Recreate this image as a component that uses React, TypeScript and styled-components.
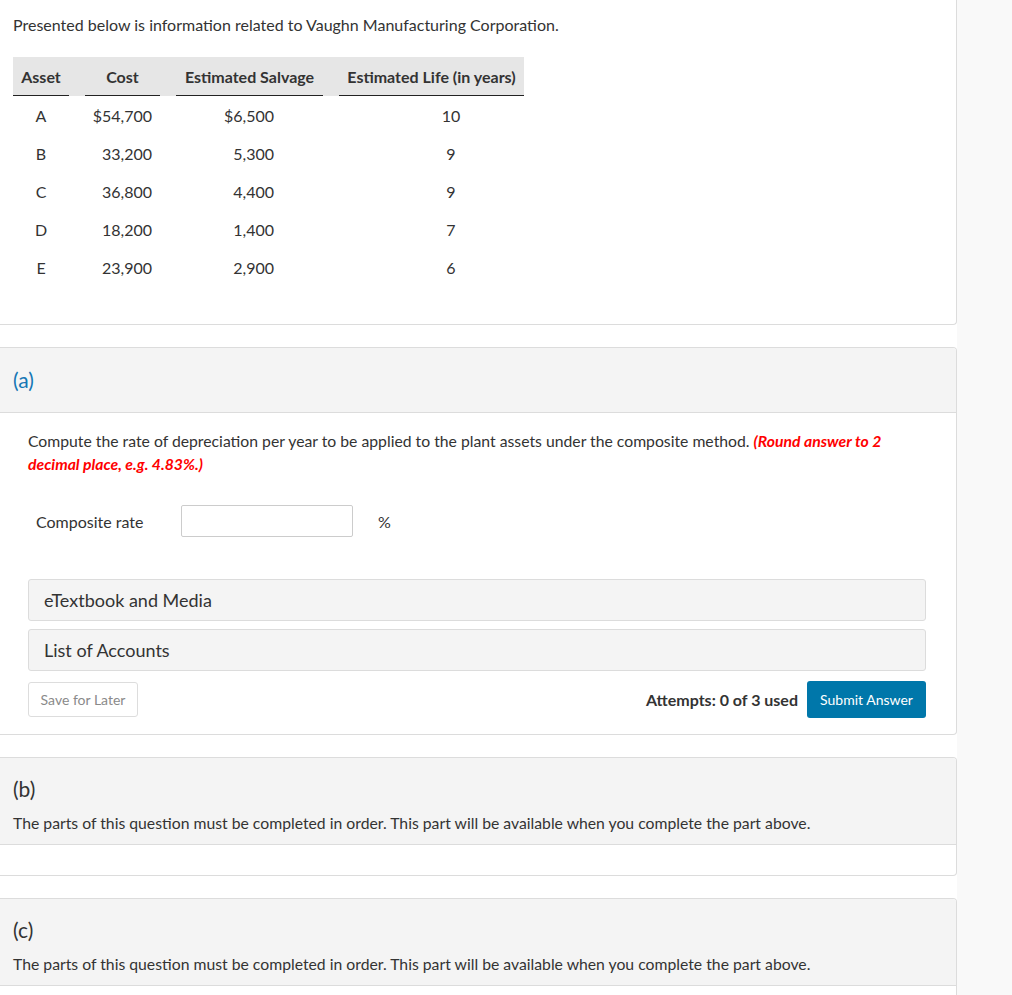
import React from 'react';
import styled, { createGlobalStyle } from 'styled-components';

const GlobalStyle = createGlobalStyle`
  body {
    margin: 0;
    background: #f9f9f9;
    font-family: Lato, "Open Sans", sans-serif;
    color: #333;
  }
`;

type Asset = { name: string; cost: string; salvage: string; life: string };

const assets: Asset[] = [
  { name: 'A', cost: '$54,700', salvage: '$6,500', life: '10' },
  { name: 'B', cost: '33,200', salvage: '5,300', life: '9' },
  { name: 'C', cost: '36,800', salvage: '4,400', life: '9' },
  { name: 'D', cost: '18,200', salvage: '1,400', life: '7' },
  { name: 'E', cost: '23,900', salvage: '2,900', life: '6' },
];

const Page = styled.div`
  width: 957px;
  background: #fff;
  min-height: 995px;
`;

const Card = styled.section<{ $first?: boolean }>`
  border: 1px solid #dcdcdc;
  border-left: none;
  border-top: ${(p) => (p.$first ? 'none' : '1px solid #dcdcdc')};
  border-radius: ${(p) => (p.$first ? '0 0 4px 0' : '0 4px 4px 0')};
  margin-bottom: 22px;
  background: #fff;
  overflow: hidden;
`;

const Intro = styled.div`
  padding: 15px 13px 38px;
`;

const IntroText = styled.p`
  margin: 0 0 22px;
  font-size: 16px;
  line-height: 20px;
`;

const Table = styled.div`
  display: grid;
  grid-template-columns: 56px 75px 147px 185px;
  column-gap: 16px;
  width: 511px;
`;

const HeadRow = styled.div`
  display: contents;
`;

const HeadCell = styled.div`
  background: #e6e6e6;
  height: 38px;
  border-bottom: 1px solid #222;
  display: flex;
  align-items: center;
  justify-content: center;
  font-weight: 700;
  font-size: 16px;
  white-space: nowrap;
  position: relative;
  &:not(:last-child)::after {
    content: '';
    position: absolute;
    top: 0;
    right: -16px;
    width: 16px;
    height: 39px;
    background: #e6e6e6;
  }
`;

const Cell = styled.div<{ $pr?: number; $pl?: number; $center?: boolean }>`
  height: 38px;
  display: flex;
  align-items: center;
  justify-content: ${(p) => (p.$center ? 'center' : 'flex-end')};
  padding-right: ${(p) => p.$pr ?? 0}px;
  padding-left: ${(p) => p.$pl ?? 0}px;
  font-size: 16px;
`;

const PartHead = styled.header<{ $tall?: boolean }>`
  background: #f4f4f4;
  border-bottom: 1px solid #dcdcdc;
  padding: ${(p) => (p.$tall ? '19px 13px 11px' : '0 13px')};
  height: ${(p) => (p.$tall ? 'auto' : '64px')};
  display: flex;
  flex-direction: column;
  justify-content: center;
`;

const PartLabel = styled.div<{ $active?: boolean }>`
  font-size: 21px;
  line-height: 24px;
  color: ${(p) => (p.$active ? '#1477b5' : '#333')};
`;

const PartNote = styled.p`
  margin: 12px 0 0;
  font-size: 15.75px;
  line-height: 20px;
`;

const Body = styled.div<{ $empty?: boolean }>`
  padding: ${(p) => (p.$empty ? '0' : '16px 30px 16px 28px')};
  height: ${(p) => (p.$empty ? '30px' : 'auto')};
`;

const Question = styled.p`
  margin: 0;
  font-size: 15.75px;
  line-height: 23px;
`;

const Hint = styled.span`
  color: #f00;
  font-weight: 700;
  font-style: italic;
`;

const AnswerRow = styled.div`
  display: flex;
  align-items: center;
  margin: 30px 0 42px 8px;
  font-size: 16px;
`;

const AnswerLabel = styled.label`
  width: 145px;
`;

const Input = styled.input`
  width: 172px;
  height: 32px;
  box-sizing: border-box;
  border: 1px solid #ccc;
  border-radius: 2px;
  margin-right: 25px;
`;

const Drawer = styled.div`
  background: #f4f4f4;
  border: 1px solid #dcdcdc;
  border-radius: 3px;
  height: 40px;
  display: flex;
  align-items: center;
  padding: 0 15px;
  font-size: 18px;
  margin-bottom: 8px;
`;

const Actions = styled.div`
  display: flex;
  align-items: center;
  margin-top: 10px;
`;

const SaveButton = styled.button`
  height: 35px;
  width: 110px;
  border: 1px solid #ddd;
  border-radius: 3px;
  background: #fff;
  color: #8a8a8a;
  font-family: Lato, sans-serif;
  font-size: 14px;
`;

const Attempts = styled.span`
  margin-left: auto;
  margin-right: 9px;
  font-weight: 700;
  font-size: 16px;
`;

const SubmitButton = styled.button`
  height: 37px;
  width: 119px;
  border: none;
  border-radius: 3px;
  background: #0077aa;
  color: #fff;
  font-family: Lato, sans-serif;
  font-size: 14px;
`;

const Locked = ({ label }: { label: string }) => (
  <Card>
    <PartHead $tall>
      <PartLabel>{label}</PartLabel>
      <PartNote>
        The parts of this question must be completed in order. This part will be available when you complete the part above.
      </PartNote>
    </PartHead>
    <Body $empty />
  </Card>
);

export default function App() {
  return (
    <>
      <GlobalStyle />
      <Page>
        <Card $first>
          <Intro>
            <IntroText>Presented below is information related to Vaughn Manufacturing Corporation.</IntroText>
            <Table>
              <HeadRow>
                <HeadCell>Asset</HeadCell>
                <HeadCell>Cost</HeadCell>
                <HeadCell>Estimated Salvage</HeadCell>
                <HeadCell>Estimated Life (in years)</HeadCell>
              </HeadRow>
              {assets.map((a) => (
                <React.Fragment key={a.name}>
                  <Cell $center>{a.name}</Cell>
                  <Cell $pr={8}>{a.cost}</Cell>
                  <Cell $pr={49}>{a.salvage}</Cell>
                  <Cell $center $pl={39}>{a.life}</Cell>
                </React.Fragment>
              ))}
            </Table>
          </Intro>
        </Card>

        <Card>
          <PartHead>
            <PartLabel $active>(a)</PartLabel>
          </PartHead>
          <Body>
            <Question>
              Compute the rate of depreciation per year to be applied to the plant assets under the composite method.{' '}
              <Hint>(Round answer to 2 decimal place, e.g. 4.83%.)</Hint>
            </Question>
            <AnswerRow>
              <AnswerLabel>Composite rate</AnswerLabel>
              <Input type="text" />
              <span>%</span>
            </AnswerRow>
            <Drawer>eTextbook and Media</Drawer>
            <Drawer>List of Accounts</Drawer>
            <Actions>
              <SaveButton>Save for Later</SaveButton>
              <Attempts>Attempts: 0 of 3 used</Attempts>
              <SubmitButton>Submit Answer</SubmitButton>
            </Actions>
          </Body>
        </Card>

        <Locked label="(b)" />
        <Locked label="(c)" />
      </Page>
    </>
  );
}
